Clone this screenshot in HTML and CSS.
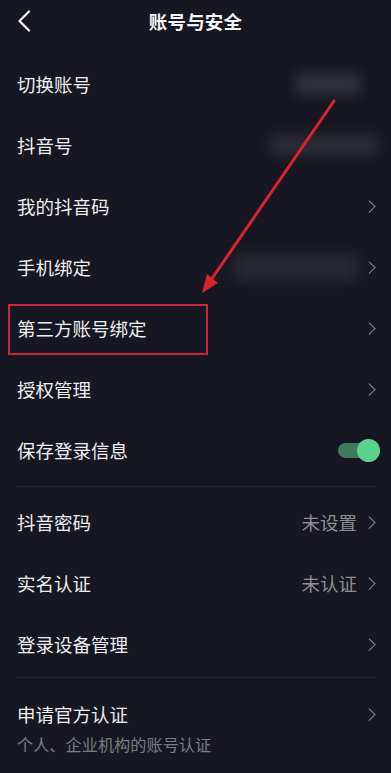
FILE: index.html
```html
<!DOCTYPE html>
<html lang="zh-CN">
<head>
<meta charset="utf-8">
<title>账号与安全</title>
<link rel="stylesheet" href="styles.css">
</head>
<body>
<div class="screen">
  <header class="header">
    <svg class="back" width="14" height="22" viewBox="0 0 14 22"><path d="M12 1.5 L2.5 11 L12 20.5" fill="none" stroke="#f2f2f4" stroke-width="2.2" stroke-linecap="round" stroke-linejoin="round"/></svg>
    <h1 class="title">账号与安全</h1>
  </header>

  <section class="group group-first">
    <div class="row"><span class="label">切换账号</span><span class="blur blur-1"></span></div>
    <div class="row"><span class="label">抖音号</span><span class="blur blur-2"></span></div>
    <div class="row"><span class="label">我的抖音码</span><span class="chev"></span></div>
    <div class="row"><span class="label">手机绑定</span><span class="right"><span class="blur blur-4"></span><span class="chev"></span></span></div>
    <div class="row row-mark"><span class="label">第三方账号绑定</span><span class="chev"></span><span class="mark"></span></div>
    <div class="row"><span class="label">授权管理</span><span class="chev"></span></div>
    <div class="row"><span class="label">保存登录信息</span><span class="toggle"><span class="knob"></span></span></div>
  </section>

  <div class="divider divider-1"></div>

  <section class="group">
    <div class="row"><span class="label">抖音密码</span><span class="right"><span class="value">未设置</span><span class="chev"></span></span></div>
    <div class="row"><span class="label">实名认证</span><span class="right"><span class="value">未认证</span><span class="chev"></span></span></div>
    <div class="row"><span class="label">登录设备管理</span><span class="chev"></span></div>
  </section>

  <div class="divider divider-2"></div>

  <section class="group">
    <div class="row-tall">
      <div class="row-tall-main"><span class="label">申请官方认证</span><span class="chev"></span></div>
      <div class="sub">个人、企业机构的账号认证</div>
    </div>
  </section>

  <svg class="arrow" width="391" height="773" viewBox="0 0 391 773">
    <path d="M334 101 L211 280" fill="none" stroke="#d9232f" stroke-width="3" stroke-linecap="round"/>
    <polygon points="202,293 218,283 207,274" fill="#d9232f"/>
  </svg>
</div>
</body>
</html>
```

FILE: styles.css
```css
* { box-sizing: border-box; }
html, body {
  margin: 0;
  padding: 0;
  background: #161722;
}
body {
  font-family: "Noto Sans CJK SC", "Noto Sans", sans-serif;
  color: #eeeef0;
  width: 391px;
  height: 773px;
  overflow: hidden;
}
.screen {
  position: relative;
  width: 391px;
  height: 773px;
  background: #161722;
}
.header {
  position: relative;
  height: 42px;
  display: flex;
  align-items: center;
  justify-content: center;
}
.back {
  position: absolute;
  left: 17px;
  top: 10px;
}
.title {
  margin: 0;
  font-size: 18.5px;
  font-weight: 700;
  line-height: 26px;
  color: #f4f4f6;
  letter-spacing: 0.2px;
}
.group-first { margin-top: 11px; }
.row {
  position: relative;
  height: 61px;
  display: flex;
  align-items: center;
  justify-content: space-between;
  padding: 0 16px 0 17px;
}
.label {
  font-size: 18.5px;
  line-height: 26px;
  color: #eeeef0;
}
.right {
  display: flex;
  align-items: center;
}
.value {
  font-size: 18.5px;
  line-height: 26px;
  color: #8d8e94;
  margin-right: 10px;
}
.chev {
  width: 8px;
  height: 13px;
  display: inline-block;
  position: relative;
}
.chev::before {
  content: "";
  position: absolute;
  left: -2px;
  top: 2.5px;
  width: 7.5px;
  height: 7.5px;
  border-right: 1.7px solid #8b8c92;
  border-top: 1.7px solid #8b8c92;
  transform: rotate(45deg);
}
.blur {
  display: inline-block;
  background: #2d2e38;
  border-radius: 8px;
  filter: blur(6px);
}
.blur-1 { width: 66px; height: 22px; margin-right: 14px; background: #30313b; }
.blur-2 { width: 110px; height: 22px; margin-right: -4px; background: #2a2b35; }
.blur-4 { width: 126px; height: 28px; margin-right: 8px; background: #272832; }
.mark {
  position: absolute;
  left: 8px;
  top: 7px;
  width: 200px;
  height: 51px;
  border: 2px solid #c62a3a;
  pointer-events: none;
}
.toggle {
  position: relative;
  width: 38px;
  height: 15px;
  margin-right: -1px;
  margin-top: 2px;
  border-radius: 8px;
  background: #3f7a5e;
}
.knob {
  position: absolute;
  right: -4px;
  top: -4px;
  width: 23px;
  height: 23px;
  border-radius: 50%;
  background: #5dd28f;
}
.divider {
  height: 1px;
  margin-left: 16px;
  margin-right: 15px;
  background: #24252f;
}
.divider-1 { margin-top: 6px; margin-bottom: 4px; }
.divider-2 { margin-top: 3px; }
.row-tall {
  padding: 23px 16px 0 17px;
}
.row-tall-main {
  display: flex;
  align-items: center;
  justify-content: space-between;
  height: 26px;
}
.sub {
  margin-top: 5px;
  font-size: 16.2px;
  line-height: 24px;
  color: #7b7c83;
}
.arrow {
  position: absolute;
  left: 0;
  top: 0;
  pointer-events: none;
}
```
